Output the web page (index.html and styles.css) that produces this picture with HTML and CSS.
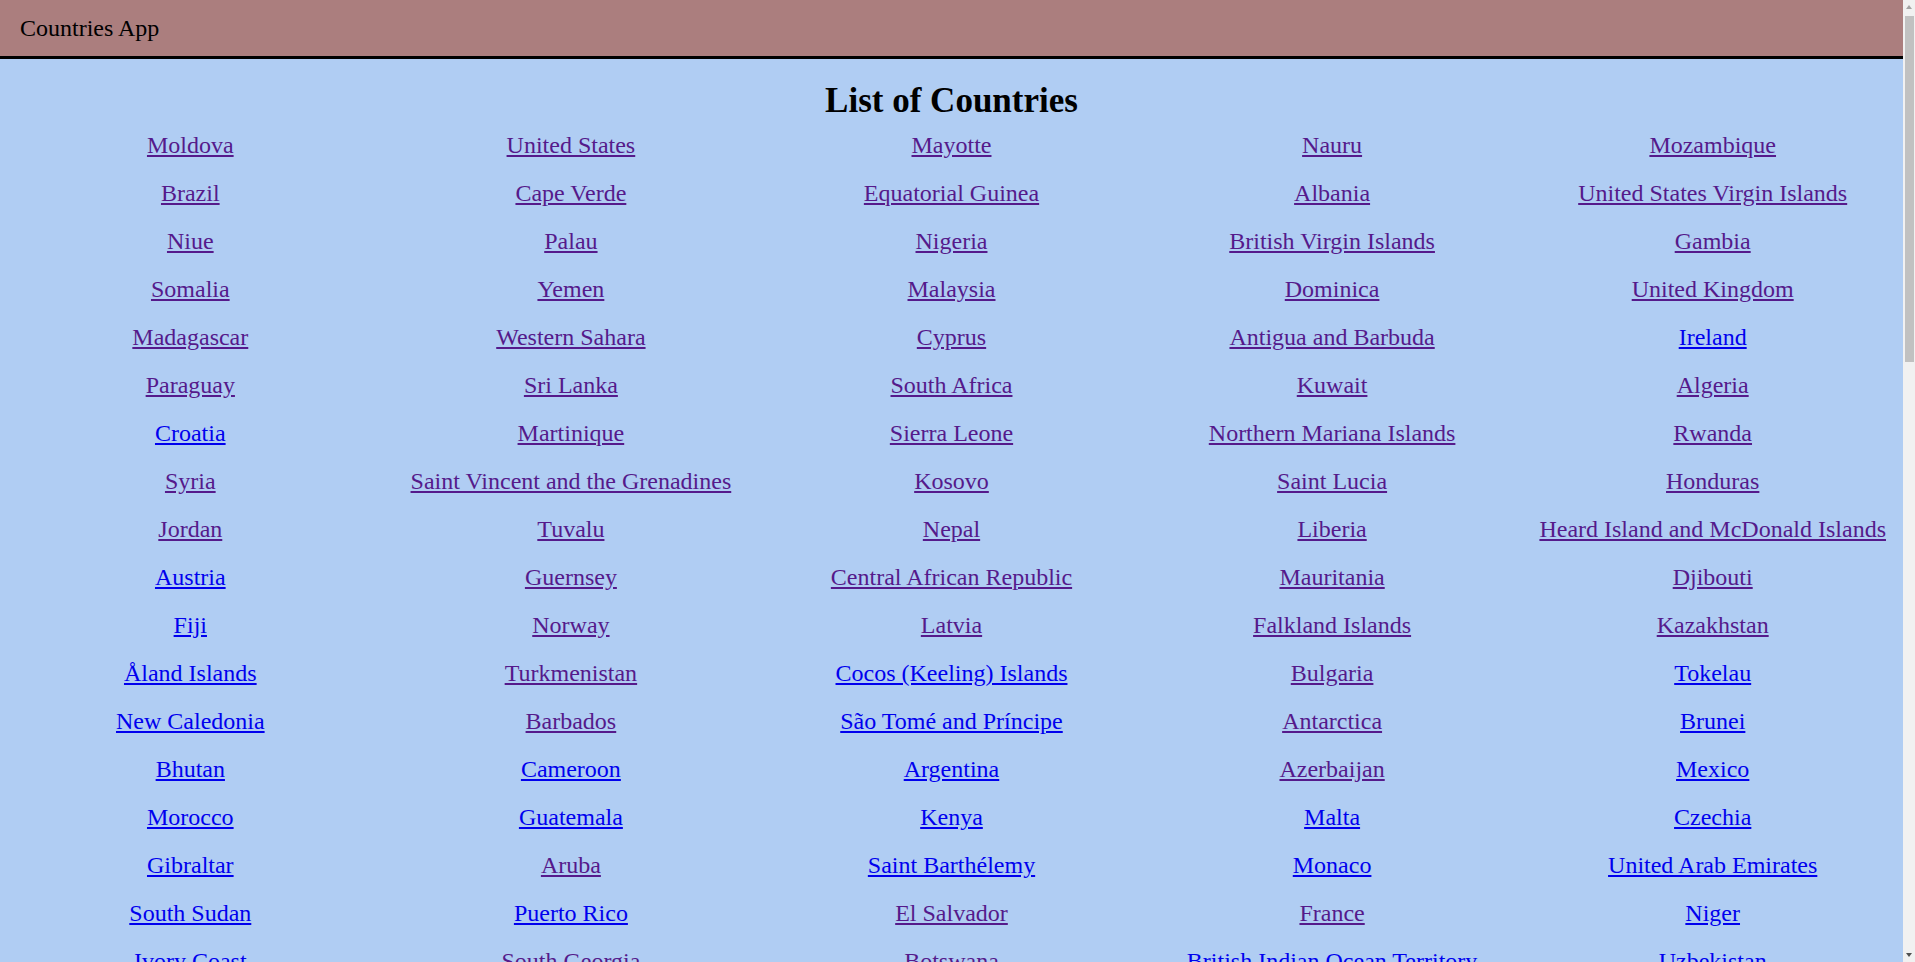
FILE: index.html
```html
<!DOCTYPE html>
<html lang="en">
<head>
<meta charset="utf-8">
<title>Countries App</title>
<link rel="stylesheet" href="styles.css">
</head>
<body>
<div class="page">
<header class="app-header">Countries App</header>
<main class="content">
<h1 class="title">List of Countries</h1>
<div class="country-grid">
<a class="country v" href="#">Moldova</a>
<a class="country v" href="#">United States</a>
<a class="country v" href="#">Mayotte</a>
<a class="country v" href="#">Nauru</a>
<a class="country v" href="#">Mozambique</a>
<a class="country v" href="#">Brazil</a>
<a class="country v" href="#">Cape Verde</a>
<a class="country v" href="#">Equatorial Guinea</a>
<a class="country v" href="#">Albania</a>
<a class="country v" href="#">United States Virgin Islands</a>
<a class="country v" href="#">Niue</a>
<a class="country v" href="#">Palau</a>
<a class="country v" href="#">Nigeria</a>
<a class="country v" href="#">British Virgin Islands</a>
<a class="country v" href="#">Gambia</a>
<a class="country v" href="#">Somalia</a>
<a class="country v" href="#">Yemen</a>
<a class="country v" href="#">Malaysia</a>
<a class="country v" href="#">Dominica</a>
<a class="country v" href="#">United Kingdom</a>
<a class="country v" href="#">Madagascar</a>
<a class="country v" href="#">Western Sahara</a>
<a class="country v" href="#">Cyprus</a>
<a class="country v" href="#">Antigua and Barbuda</a>
<a class="country" href="#">Ireland</a>
<a class="country v" href="#">Paraguay</a>
<a class="country v" href="#">Sri Lanka</a>
<a class="country v" href="#">South Africa</a>
<a class="country v" href="#">Kuwait</a>
<a class="country v" href="#">Algeria</a>
<a class="country" href="#">Croatia</a>
<a class="country v" href="#">Martinique</a>
<a class="country v" href="#">Sierra Leone</a>
<a class="country v" href="#">Northern Mariana Islands</a>
<a class="country v" href="#">Rwanda</a>
<a class="country v" href="#">Syria</a>
<a class="country v" href="#">Saint Vincent and the Grenadines</a>
<a class="country v" href="#">Kosovo</a>
<a class="country v" href="#">Saint Lucia</a>
<a class="country v" href="#">Honduras</a>
<a class="country v" href="#">Jordan</a>
<a class="country v" href="#">Tuvalu</a>
<a class="country v" href="#">Nepal</a>
<a class="country v" href="#">Liberia</a>
<a class="country v" href="#">Heard Island and McDonald Islands</a>
<a class="country" href="#">Austria</a>
<a class="country v" href="#">Guernsey</a>
<a class="country v" href="#">Central African Republic</a>
<a class="country v" href="#">Mauritania</a>
<a class="country v" href="#">Djibouti</a>
<a class="country" href="#">Fiji</a>
<a class="country v" href="#">Norway</a>
<a class="country v" href="#">Latvia</a>
<a class="country v" href="#">Falkland Islands</a>
<a class="country v" href="#">Kazakhstan</a>
<a class="country" href="#">Åland Islands</a>
<a class="country v" href="#">Turkmenistan</a>
<a class="country" href="#">Cocos (Keeling) Islands</a>
<a class="country v" href="#">Bulgaria</a>
<a class="country" href="#">Tokelau</a>
<a class="country" href="#">New Caledonia</a>
<a class="country v" href="#">Barbados</a>
<a class="country" href="#">São Tomé and Príncipe</a>
<a class="country v" href="#">Antarctica</a>
<a class="country" href="#">Brunei</a>
<a class="country" href="#">Bhutan</a>
<a class="country" href="#">Cameroon</a>
<a class="country" href="#">Argentina</a>
<a class="country v" href="#">Azerbaijan</a>
<a class="country" href="#">Mexico</a>
<a class="country" href="#">Morocco</a>
<a class="country" href="#">Guatemala</a>
<a class="country" href="#">Kenya</a>
<a class="country" href="#">Malta</a>
<a class="country" href="#">Czechia</a>
<a class="country" href="#">Gibraltar</a>
<a class="country v" href="#">Aruba</a>
<a class="country" href="#">Saint Barthélemy</a>
<a class="country" href="#">Monaco</a>
<a class="country" href="#">United Arab Emirates</a>
<a class="country" href="#">South Sudan</a>
<a class="country" href="#">Puerto Rico</a>
<a class="country v" href="#">El Salvador</a>
<a class="country v" href="#">France</a>
<a class="country" href="#">Niger</a>
<a class="country" href="#">Ivory Coast</a>
<a class="country v" href="#">South Georgia</a>
<a class="country v" href="#">Botswana</a>
<a class="country" href="#">British Indian Ocean Territory</a>
<a class="country" href="#">Uzbekistan</a>
<a class="country" href="#">Tunisia</a>
<a class="country" href="#">Hong Kong</a>
<a class="country" href="#">North Macedonia</a>
<a class="country" href="#">Suriname</a>
<a class="country" href="#">Belgium</a>
<a class="country" href="#">American Samoa</a>
<a class="country" href="#">Solomon Islands</a>
<a class="country" href="#">Ukraine</a>
<a class="country" href="#">Finland</a>
<a class="country" href="#">Burkina Faso</a>
<a class="country" href="#">Bosnia and Herzegovina</a>
<a class="country" href="#">Iran</a>
<a class="country" href="#">Cuba</a>
<a class="country" href="#">Eritrea</a>
<a class="country" href="#">Slovakia</a>
<a class="country" href="#">Lithuania</a>
<a class="country" href="#">Saint Martin</a>
<a class="country" href="#">Pitcairn Islands</a>
<a class="country" href="#">Guinea-Bissau</a>
<a class="country" href="#">Montserrat</a>
<a class="country" href="#">Turkey</a>
<a class="country" href="#">Philippines</a>
<a class="country" href="#">Vanuatu</a>
<a class="country" href="#">Bolivia</a>
<a class="country" href="#">Saint Kitts and Nevis</a>
<a class="country" href="#">Romania</a>
<a class="country" href="#">Cambodia</a>
<a class="country" href="#">Zimbabwe</a>
<a class="country" href="#">Jersey</a>
<a class="country" href="#">Kyrgyzstan</a>
<a class="country" href="#">Caribbean Netherlands</a>
<a class="country" href="#">Guyana</a>
<a class="country" href="#">United States Minor Outlying Islands</a>
<a class="country" href="#">Armenia</a>
<a class="country" href="#">Lebanon</a>
<a class="country" href="#">Montenegro</a>
<a class="country" href="#">Greenland</a>
<a class="country" href="#">Papua New Guinea</a>
<a class="country" href="#">Zambia</a>
<a class="country" href="#">Trinidad and Tobago</a>
<a class="country" href="#">French Southern and Antarctic Lands</a>
<a class="country" href="#">Peru</a>
<a class="country" href="#">Sweden</a>
<a class="country" href="#">Sudan</a>
<a class="country" href="#">Saint Pierre and Miquelon</a>
<a class="country" href="#">Oman</a>
<a class="country" href="#">India</a>
<a class="country" href="#">Taiwan</a>
<a class="country" href="#">Mongolia</a>
<a class="country" href="#">Senegal</a>
<a class="country" href="#">Tanzania</a>
<a class="country" href="#">Canada</a>
<a class="country" href="#">Costa Rica</a>
<a class="country" href="#">China</a>
<a class="country" href="#">Colombia</a>
<a class="country" href="#">Myanmar</a>
<a class="country" href="#">Russia</a>
<a class="country" href="#">North Korea</a>
<a class="country" href="#">Cayman Islands</a>
<a class="country" href="#">Bouvet Island</a>
<a class="country" href="#">Belarus</a>
<a class="country" href="#">Portugal</a>
<a class="country" href="#">Eswatini</a>
<a class="country" href="#">Poland</a>
<a class="country" href="#">Switzerland</a>
<a class="country" href="#">Republic of the Congo</a>
<a class="country" href="#">Venezuela</a>
<a class="country" href="#">Panama</a>
<a class="country" href="#">Netherlands</a>
<a class="country" href="#">Samoa</a>
<a class="country" href="#">Denmark</a>
<a class="country" href="#">Luxembourg</a>
<a class="country" href="#">Faroe Islands</a>
<a class="country" href="#">Slovenia</a>
<a class="country" href="#">Togo</a>
<a class="country" href="#">Thailand</a>
<a class="country" href="#">Wallis and Futuna</a>
<a class="country" href="#">Bahamas</a>
<a class="country" href="#">Tonga</a>
<a class="country" href="#">Greece</a>
<a class="country" href="#">San Marino</a>
<a class="country" href="#">Réunion</a>
<a class="country" href="#">Vatican City</a>
<a class="country" href="#">Burundi</a>
<a class="country" href="#">Bahrain</a>
<a class="country" href="#">Marshall Islands</a>
<a class="country" href="#">Turks and Caicos Islands</a>
<a class="country" href="#">Isle of Man</a>
<a class="country" href="#">Haiti</a>
<a class="country" href="#">Afghanistan</a>
<a class="country" href="#">Israel</a>
<a class="country" href="#">Libya</a>
<a class="country" href="#">Uruguay</a>
<a class="country" href="#">Norfolk Island</a>
<a class="country" href="#">Nicaragua</a>
<a class="country" href="#">Cook Islands</a>
<a class="country" href="#">Laos</a>
<a class="country" href="#">Christmas Island</a>
<a class="country" href="#">Saint Helena, Ascension and Tristan da Cunha</a>
<a class="country" href="#">Anguilla</a>
<a class="country" href="#">Micronesia</a>
<a class="country" href="#">Germany</a>
<a class="country" href="#">Guam</a>
<a class="country" href="#">Kiribati</a>
<a class="country" href="#">Sint Maarten</a>
<a class="country" href="#">Spain</a>
<a class="country" href="#">Jamaica</a>
<a class="country" href="#">Palestine</a>
<a class="country" href="#">French Guiana</a>
<a class="country" href="#">Andorra</a>
<a class="country" href="#">Chile</a>
<a class="country" href="#">Lesotho</a>
<a class="country" href="#">Australia</a>
<a class="country" href="#">Grenada</a>
<a class="country" href="#">Ghana</a>
<a class="country" href="#">Seychelles</a>
<a class="country" href="#">Angola</a>
<a class="country" href="#">Bermuda</a>
<a class="country" href="#">Pakistan</a>
<a class="country" href="#">Mali</a>
<a class="country" href="#">Saudi Arabia</a>
<a class="country" href="#">Curaçao</a>
<a class="country" href="#">South Korea</a>
<a class="country" href="#">Ethiopia</a>
<a class="country" href="#">Guadeloupe</a>
<a class="country" href="#">Bangladesh</a>
<a class="country" href="#">New Zealand</a>
<a class="country" href="#">Comoros</a>
<a class="country" href="#">Belize</a>
<a class="country" href="#">Uganda</a>
<a class="country" href="#">Singapore</a>
<a class="country" href="#">Liechtenstein</a>
<a class="country" href="#">Hungary</a>
<a class="country" href="#">Iceland</a>
<a class="country" href="#">Tajikistan</a>
<a class="country" href="#">Namibia</a>
<a class="country" href="#">Timor-Leste</a>
<a class="country" href="#">Egypt</a>
<a class="country" href="#">Serbia</a>
<a class="country" href="#">Mauritius</a>
<a class="country" href="#">Macau</a>
<a class="country" href="#">Indonesia</a>
<a class="country" href="#">Vietnam</a>
<a class="country" href="#">Georgia</a>
<a class="country" href="#">Estonia</a>
<a class="country" href="#">Ecuador</a>
<a class="country" href="#">Dominican Republic</a>
<a class="country" href="#">Qatar</a>
<a class="country" href="#">Iraq</a>
<a class="country" href="#">Japan</a>
<a class="country" href="#">Italy</a>
<a class="country" href="#">Maldives</a>
<a class="country" href="#">Malawi</a>
<a class="country" href="#">Gabon</a>
<a class="country" href="#">Guinea</a>
<a class="country" href="#">Chad</a>
<a class="country" href="#">Benin</a>
<a class="country" href="#">DR Congo</a>
<a class="country" href="#">French Polynesia</a>
<a class="country" href="#">Svalbard and Jan Mayen</a>
</div>
</main>
</div>
<div class="scrollbar" aria-hidden="true">
<span class="scroll-arrow up"></span>
<span class="scroll-thumb"></span>
<span class="scroll-arrow down"></span>
</div>
</body>
</html>
```

FILE: styles.css
```css
html, body {
  margin: 0;
  padding: 0;
}

body {
  background: #b0cdf3;
  font-family: "Liberation Serif", "Times New Roman", serif;
  color: #000;
}

.page {
  margin-right: 12px;
}

.app-header {
  background: #ab7e7e;
  border-bottom: 3px solid #000;
  padding: 14px 20px;
  font-size: 24px;
  line-height: 28px;
}

.title {
  margin: 22px 0 0;
  font-size: 35px;
  line-height: 40px;
  font-weight: bold;
  text-align: center;
}

.country-grid {
  display: grid;
  grid-template-columns: repeat(5, 1fr);
  text-align: center;
}

.country {
  display: block;
  justify-self: center;
  padding: 10px 0;
  font-size: 24px;
  line-height: 28px;
  color: #0000ee;
  text-decoration: underline;
}

.country.v {
  color: #551a8b;
}

/* decorative classic scrollbar overlay at the right edge */
.scrollbar {
  position: fixed;
  top: 0;
  right: 0;
  width: 12px;
  height: 100vh;
  background: #f1f1f1;
}

.scroll-thumb {
  position: absolute;
  top: 16px;
  left: 2px;
  right: 1px;
  height: 346px;
  background: #c1c1c1;
}

.scroll-arrow {
  position: absolute;
  left: 3px;
  width: 0;
  height: 0;
  border-left: 3px solid transparent;
  border-right: 3px solid transparent;
}

.scroll-arrow.up {
  top: 5px;
  border-bottom: 4px solid #a3a3a3;
}

.scroll-arrow.down {
  bottom: 5px;
  border-top: 4px solid #505050;
}
```
